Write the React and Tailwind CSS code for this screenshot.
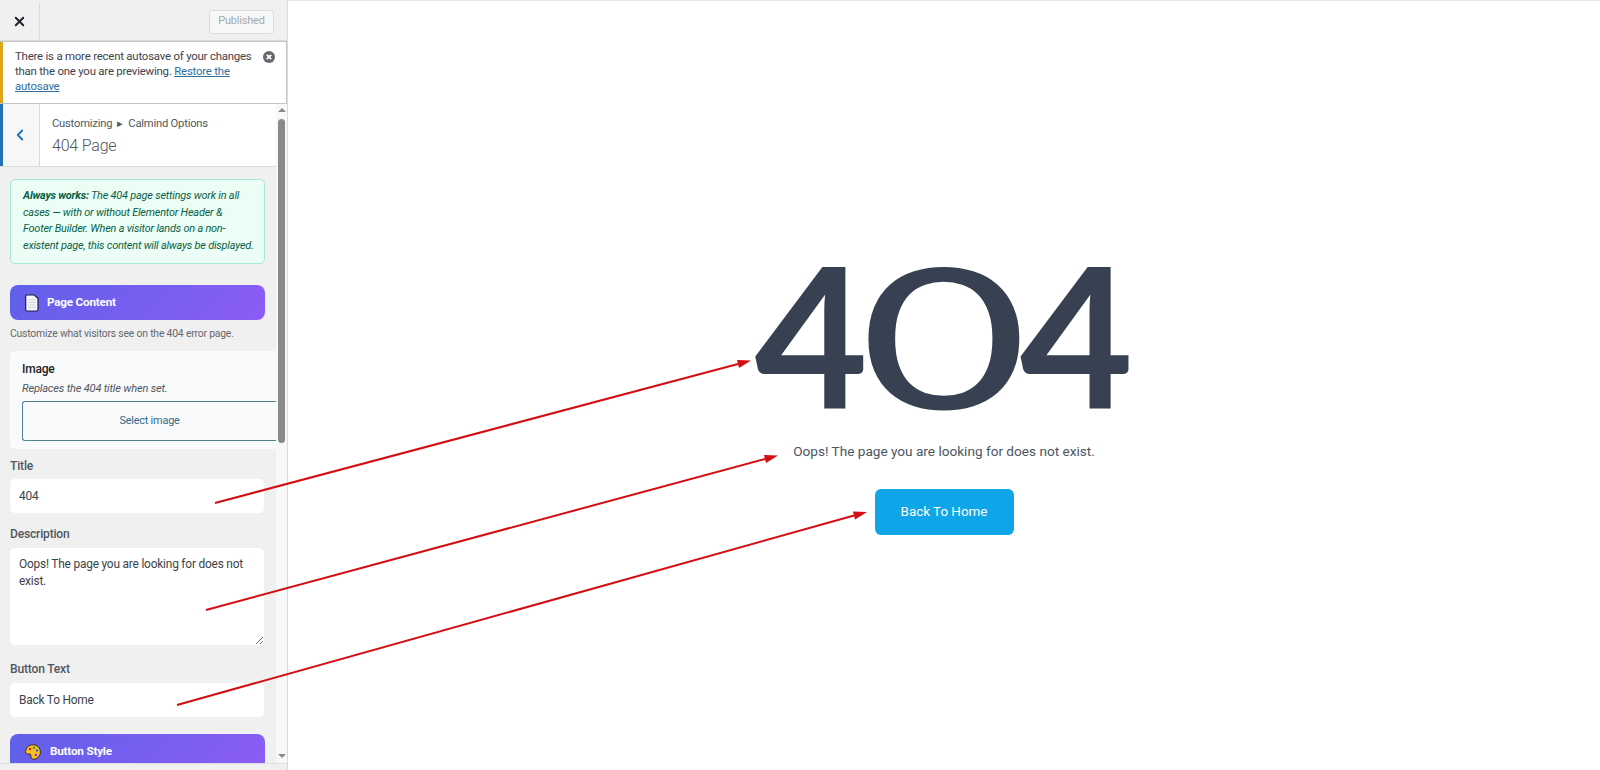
import { ChevronLeft, X } from "lucide-react";

const sidebarFont = "font-['Roboto',sans-serif] tracking-[-0.2px]";

function DocIcon() {
    return (
        <svg width="14" height="18" viewBox="0 0 14 18" className="shrink-0">
            <path d="M1.5 1h8l3.5 3.5v11a1.5 1.5 0 0 1-1.5 1.5h-10A1 1 0 0 1 .7 16V2A1 1 0 0 1 1.5 1z" fill="#f4f5f8" stroke="#1e1b4b" strokeWidth="1.2" />
            <path d="M3 6h8M3 8.5h8M3 11h8M3 13.5h8" stroke="#cfd2da" strokeWidth="1.2" />
        </svg>
    );
}

function PaletteIcon() {
    return (
        <svg width="16" height="16" viewBox="0 0 16 16" className="shrink-0">
            <path d="M8 .8C3.8.8.6 3.9.6 7.8c0 2.2 1.6 2.6 3 2.2 1.6-.4 2.5.4 2.2 1.8-.3 1.6.6 3.4 2.6 3.4 3.9 0 7-3.2 7-7.2S12.2.8 8 .8z" fill="#fbbf24" stroke="#3b2a10" strokeWidth="1" />
            <circle cx="5" cy="5" r="1.3" fill="#dc2626" />
            <circle cx="9" cy="3.8" r="1.2" fill="#16a34a" />
            <circle cx="12" cy="6.5" r="1.2" fill="#2563eb" />
            <circle cx="11" cy="11" r="1.3" fill="#7c3aed" />
        </svg>
    );
}

function SectionBar({ icon, label, className }) {
    return (
        <div className={`flex items-center rounded-lg bg-linear-135 from-[#5f60ea] to-[#8b5cf6] text-white font-bold text-[11.7px] ${className}`}>
            {icon}
            <span>{label}</span>
        </div>
    );
}

function FieldLabel({ children, className }) {
    return <label className={`block text-[12.1px] leading-[16px] font-medium text-[#50575e] ${className}`}>{children}</label>;
}

function Sidebar() {
    return (
        <aside className={`relative w-[288px] h-[770px] shrink-0 flex flex-col overflow-hidden bg-[#f0f0f1] border-r border-[#dcdcde] ${sidebarFont}`}>
            <div className="flex h-[41px] shrink-0 items-center pt-[3px] border-b border-[#dcdcde]">
                <div className="flex h-full w-[40px] items-center justify-center border-r border-[#dcdcde]">
                    <X size={15} strokeWidth={3} className="text-[#1d2327]" />
                </div>
                <div className="ml-auto mr-[13px] flex h-[24px] w-[65px] items-center justify-center rounded-[3px] border border-[#dcdcde] bg-[#f6f7f7] text-[11px] text-[#a7aaad]">
                    Published
                </div>
            </div>

            <div className="flex h-[63px] shrink-0 border border-[#c3c4c7] border-l-0 bg-white">
                <div className="w-[3px] bg-[#dba617]" />
                <p className="ml-[12px] w-[240px] pt-[7px] text-[11.4px] leading-[15px] text-[#3c434a]">
                    There is a more recent autosave of your changes than the one you are previewing.{" "}
                    <a className="text-[#2e6f9e] underline">Restore the autosave</a>
                </p>
                <svg width="12" height="12" viewBox="0 0 12 12" className="ml-[8px] mt-[9px] shrink-0">
                    <circle cx="6" cy="6" r="6" fill="#646970" />
                    <path d="M3.8 3.8l4.4 4.4M8.2 3.8l-4.4 4.4" stroke="#fff" strokeWidth="1.8" />
                </svg>
            </div>

            <div className="flex h-[63px] shrink-0 w-[276px] border-b border-[#dcdcde] bg-white">
                <div className="flex w-[40px] items-center justify-center pr-[3px] border-r border-[#dcdcde] border-l-[3px] border-l-[#2271b1] bg-[#f6f7f7]">
                    <ChevronLeft size={18} strokeWidth={2.5} className="text-[#2271b1]" />
                </div>
                <div className="pl-[12px] pt-[11px]">
                    <div className="text-[11.2px] leading-[18px] text-[#50575e]">Customizing&nbsp; ▸ &nbsp;Calmind Options</div>
                    <div className="text-[16px] leading-[26px] font-light text-[#50575e]">404 Page</div>
                </div>
            </div>

            <div className="w-[276px] flex-1 overflow-hidden pl-[10px] pt-[12px]">
                <div className="w-[255px] h-[85px] rounded-[5px] border border-[#a7e8d0] bg-[#ecfdf5] pl-[12px] pr-[4px] pt-[8px] text-[10.9px] italic leading-[16.6px] text-[#065f46]">
                    <strong>Always works:</strong> The 404 page settings work in all cases — with or without Elementor Header &amp;<br />Footer Builder. When a visitor lands on a non-<br />existent page, this content will always be displayed.
                </div>

                <SectionBar className="mt-[21px] h-[35px] w-[255px] gap-[8px] pl-[15px]" icon={<DocIcon />} label="Page Content" />
                <p className="mt-[6px] text-[10.4px] leading-[16px] text-[#646970]">Customize what visitors see on the 404 error page.</p>

                <div className="mt-[9px] h-[98px] w-[266px] overflow-hidden rounded-l-[5px] bg-[#f9fafb] pl-[12px] pt-[9px]">
                    <div className="text-[12px] leading-[18px] font-medium text-[#1d2327]">Image</div>
                    <div className="mt-[3px] text-[11.1px] leading-[16px] italic text-[#50575e]">Replaces the 404 title when set.</div>
                    <div className="mt-[4px] flex h-[40px] w-[254px] items-center justify-center rounded-l-[3px] border border-r-0 border-[#4f7f90] bg-[#f9fafb] text-[10.9px] text-[#2f6b8a]">
                        Select image
                    </div>
                </div>

                <FieldLabel className="mt-[9px]">Title</FieldLabel>
                <input readOnly value="404" className="mt-[5px] block h-[34px] w-[254px] rounded-[5px] bg-white pl-[9px] text-[11.9px] text-[#3c434a] outline-none" />

                <FieldLabel className="mt-[13px]">Description</FieldLabel>
                <textarea readOnly defaultValue="Oops! The page you are looking for does not exist." className="mt-[6px] block h-[97px] w-[254px] rounded-[5px] bg-white px-[9px] pt-[8px] text-[11.9px] leading-[16.6px] text-[#3c434a] outline-none" />

                <FieldLabel className="mt-[16px]">Button Text</FieldLabel>
                <input readOnly value="Back To Home" className="mt-[6px] block h-[34px] w-[254px] rounded-[5px] bg-white pl-[9px] text-[11.9px] text-[#3c434a] outline-none" />

                <SectionBar className="mt-[17px] h-[35px] w-[255px] gap-[9px] pl-[15px]" icon={<PaletteIcon />} label="Button Style" />
            </div>

            {/* scrollbar + footer strip sit over the panel */}
            <div className="absolute right-0 top-[104px] bottom-[7px] w-[11px] bg-[#f8f8f8]">
                <div className="mx-auto mt-[4px] h-0 w-0 border-x-[4px] border-b-[4px] border-x-transparent border-b-[#8a8a8a]" />
                <div className="mx-auto mt-[7px] h-[324px] w-[7px] rounded-full bg-[#8a8a8a]" />
                <div className="absolute bottom-[5px] left-[2px] h-0 w-0 border-x-[4px] border-t-[4px] border-x-transparent border-t-[#8a8a8a]" />
            </div>
            <div className="absolute inset-x-0 bottom-0 h-[7px] border-t border-[#dcdcde] bg-[#f0f0f1]" />
        </aside>
    );
}

function Arrows() {
    const lines = [
        [215, 503, 738, 364, 751, 360.5],
        [206, 610, 765, 459, 778, 455.5],
        [177, 705, 854, 515.5, 867, 512],
    ];
    return (
        <svg width="1600" height="770" className="absolute left-0 top-0 pointer-events-none">
            {lines.map(([x1, y1, x2, y2, tx, ty]) => {
                const dx = tx - x2;
                const dy = ty - y2;
                return (
                    <g key={x1}>
                        <line x1={x1} y1={y1} x2={x2} y2={y2} stroke="#d40d12" strokeWidth="2" />
                        <polygon points={`${tx},${ty} ${x2 + dy * 0.3},${y2 - dx * 0.3} ${x2 - dy * 0.3},${y2 + dx * 0.3}`} fill="#d40d12" />
                    </g>
                );
            })}
        </svg>
    );
}

export default function App() {
    return (
        <div className="relative flex h-[770px] w-[1600px] overflow-hidden bg-white">
            <Sidebar />
            <main className="flex-1 border-t border-[#e5e5e5] flex flex-col items-center pt-[229px] font-['Roboto',sans-serif]">
                <h1 className="flex h-[208px] items-center text-[196px] leading-none font-bold text-[#374151] font-['Lato',sans-serif]">
                    <span>4</span>
                    <span className="mx-[19px] inline-block scale-x-[1.48] font-normal">0</span>
                    <span>4</span>
                </h1>
                <p className="mt-[1px] text-[13.6px] leading-[24px] text-[#4b5563]">Oops! The page you are looking for does not exist.</p>
                <a className="mt-[26px] flex h-[46px] w-[139px] items-center justify-center rounded-[6px] bg-[#0ea5e9] text-[13.4px] text-white">Back To Home</a>
            </main>
            <Arrows />
        </div>
    );
}
